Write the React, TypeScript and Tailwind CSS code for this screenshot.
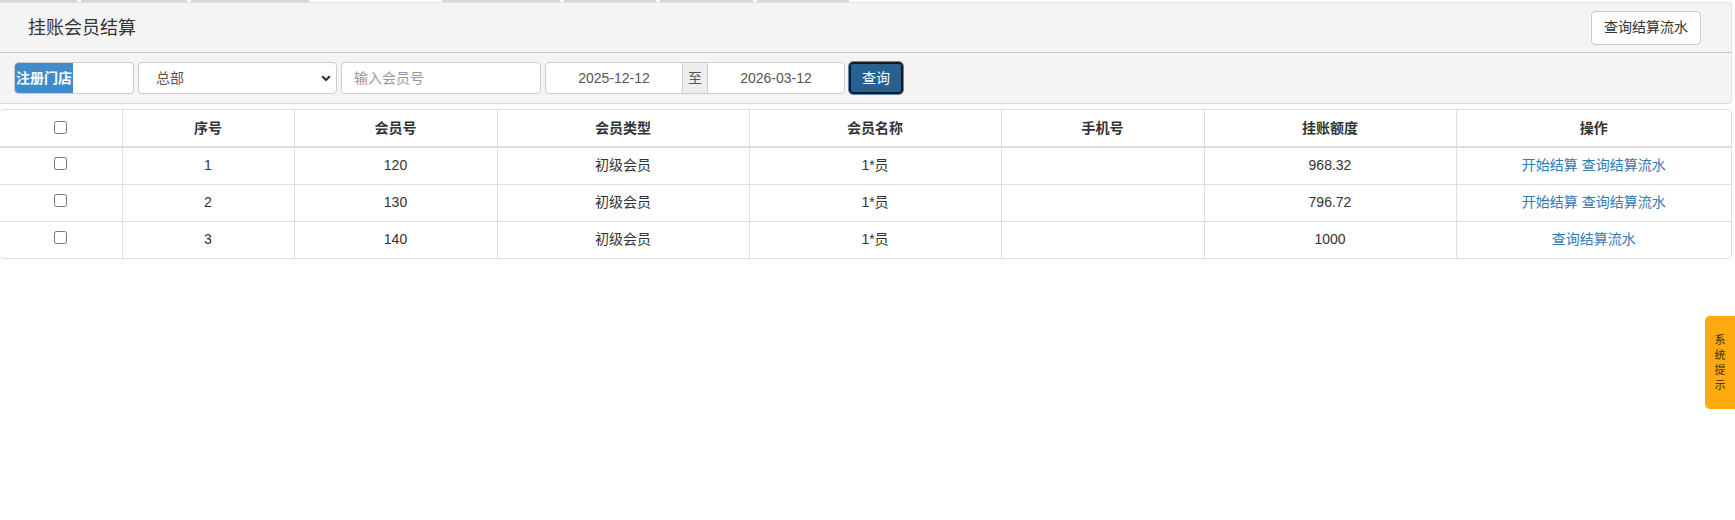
import React from "react";

const tabs: { w: number; active?: boolean }[] = [
  { w: 77 },
  { w: 106 },
  { w: 118 },
  { w: 125, active: true },
  { w: 118 },
  { w: 92 },
  { w: 93 },
  { w: 92 },
];

const rows = [
  { no: 1, id: "120", type: "初级会员", name: "1*员", phone: "", amount: "968.32", settle: true },
  { no: 2, id: "130", type: "初级会员", name: "1*员", phone: "", amount: "796.72", settle: true },
  { no: 3, id: "140", type: "初级会员", name: "1*员", phone: "", amount: "1000", settle: false },
];

const headers = ["序号", "会员号", "会员类型", "会员名称", "手机号", "挂账额度", "操作"];
const colWidths = [122, 172, 203, 252, 252, 203, 252, 275];

export default function App() {
  return (
    <div className="relative w-full h-[520px] overflow-hidden bg-white font-['Liberation_Sans','Noto_Sans_CJK_SC',sans-serif] text-[14px] text-[#333]">
      <div className="ml-[-1px] w-[1733px]">
        {/* top tab strip */}
        <div className="flex h-[2px] gap-[4px] pl-[1px]">
          {tabs.map((t, i) => (
            <div
              key={i}
              className={t.active ? "h-[2px] bg-white" : "h-[2px] bg-[#d6d6de]"}
              style={{ width: t.w }}
            />
          ))}
        </div>

        {/* header panel */}
        <div className="border border-[#e2e2e2] border-b-[#dcdcdc] rounded-tr-[4px] rounded-br-[4px] bg-[#f4f4f4]">
          <div className="flex h-[50px] items-center justify-between border-b border-[#c8c8c8] pl-[28px] pr-[30px]">
            <div className="text-[18px] leading-none text-[#333]">挂账会员结算</div>
            <button className="h-[34px] rounded-[4px] border border-[#ccc] bg-white px-[12px] text-[14px] text-[#333]">
              查询结算流水
            </button>
          </div>
          <div className="flex h-[50px] items-start gap-[4px] pl-[14px] pt-[9px]">
            {/* 注册门店 */}
            <div className="flex h-[32px] w-[120px] items-stretch overflow-hidden rounded-[4px] border border-[#ccc] bg-white">
              <span className="flex items-center rounded-l-[3px] bg-[#428bca] pl-[1px] pr-[1px] text-[14px] font-bold text-white">
                注册门店
              </span>
            </div>
            {/* select */}
            <div className="relative h-[32px] w-[199px] rounded-[4px] border border-[#ccc] bg-white">
              <select className="h-full w-full appearance-none bg-transparent pl-[17px] text-[14px] text-[#555] outline-none">
                <option>总部</option>
              </select>
              <svg
                className="pointer-events-none absolute right-[5px] top-[12px]"
                width="10"
                height="7"
                viewBox="0 0 10 7"
              >
                <path d="M1.2 1.2 L5 5 L8.8 1.2" fill="none" stroke="#333" strokeWidth="2.2" />
              </svg>
            </div>
            {/* member input */}
            <input
              className="h-[32px] w-[200px] rounded-[4px] border border-[#ccc] bg-white px-[12px] text-[14px] text-[#555] placeholder:text-[#999] outline-none"
              placeholder="输入会员号"
            />
            {/* date range */}
            <div className="flex h-[32px]">
              <div className="flex w-[138px] items-center justify-center rounded-l-[4px] border border-[#ccc] bg-white text-[14px] text-[#555]">
                2025-12-12
              </div>
              <div className="flex w-[24px] items-center justify-center border-y border-[#ccc] bg-[#eee] text-[14px] text-[#555]">
                至
              </div>
              <div className="flex w-[138px] items-center justify-center rounded-r-[4px] border border-[#ccc] bg-white text-[14px] text-[#555]">
                2026-03-12
              </div>
            </div>
            <button className="h-[32px] w-[54px] rounded-[4px] border-2 border-[#151a20] bg-[#286090] text-[14px] text-white outline outline-1 outline-[#5a8cbc]">
              查询
            </button>
          </div>
        </div>

        {/* table panel */}
        <div className="mt-[5px] overflow-hidden rounded-[4px] border border-[#ddd] bg-white">
          <table className="w-[1731px] table-fixed border-collapse border-hidden">
            <colgroup>
              {colWidths.map((w, i) => (
                <col key={i} style={{ width: w }} />
              ))}
            </colgroup>
            <thead>
              <tr>
                <th className="h-[37px] border border-b-2 border-[#ddd] p-0 text-center align-middle">
                  <input type="checkbox" className="relative top-[-1px] m-0 h-[13px] w-[13px] align-middle" />
                </th>
                {headers.map((h) => (
                  <th
                    key={h}
                    className="h-[37px] border border-b-2 border-[#ddd] p-0 text-center align-middle text-[14px] font-bold text-[#333]"
                  >
                    {h}
                  </th>
                ))}
              </tr>
            </thead>
            <tbody>
              {rows.map((r) => (
                <tr key={r.no}>
                  <td className="h-[37px] border border-[#ddd] p-0 text-center align-middle">
                    <input type="checkbox" className="relative top-[-3px] m-0 h-[13px] w-[13px] align-middle" />
                  </td>
                  <td className="h-[37px] border border-[#ddd] p-0 text-center align-middle text-[14px]">{r.no}</td>
                  <td className="h-[37px] border border-[#ddd] p-0 text-center align-middle text-[14px]">{r.id}</td>
                  <td className="h-[37px] border border-[#ddd] p-0 text-center align-middle text-[14px]">{r.type}</td>
                  <td className="h-[37px] border border-[#ddd] p-0 text-center align-middle text-[14px]">{r.name}</td>
                  <td className="h-[37px] border border-[#ddd] p-0 text-center align-middle text-[14px]">{r.phone}</td>
                  <td className="h-[37px] border border-[#ddd] p-0 text-center align-middle text-[14px]">{r.amount}</td>
                  <td className="h-[37px] border border-[#ddd] p-0 text-center align-middle text-[14px] text-[#337ab7]">
                    {r.settle ? (
                      <>
                        <a className="cursor-pointer">开始结算</a> <a className="cursor-pointer">查询结算流水</a>
                      </>
                    ) : (
                      <a className="cursor-pointer">查询结算流水</a>
                    )}
                  </td>
                </tr>
              ))}
            </tbody>
          </table>
        </div>
      </div>

      {/* 系统提示 tab */}
      <div className="absolute right-[-4px] top-[316px] flex h-[93px] w-[34px] flex-col items-center justify-center rounded-l-[5px] bg-[#ffaa0d] pr-[4px] text-[11px] leading-[15px] text-[#3a2e10]">
        <span>系</span>
        <span>统</span>
        <span>提</span>
        <span>示</span>
      </div>
    </div>
  );
}
